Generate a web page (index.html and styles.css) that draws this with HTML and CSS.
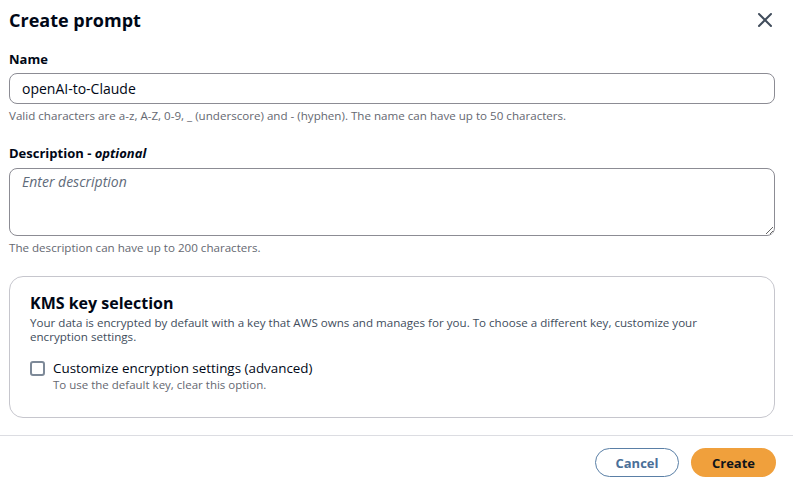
FILE: index.html
```html
<!DOCTYPE html>
<html lang="en">
<head>
    <meta charset="UTF-8">
    <title>Create prompt</title>
    <link rel="stylesheet" href="styles.css">
</head>
<body>
    <div class="modal">
        <!-- Header -->
        <div class="modal-header">
            <h1>Create prompt</h1>
            <button class="close-btn" title="Close">
                <svg width="16" height="16" viewBox="0 0 16 16"><path d="M2 2 L14 14 M14 2 L2 14" stroke="#414d5c" stroke-width="2" fill="none" stroke-linecap="round"/></svg>
            </button>
        </div>

        <!-- Body -->
        <div class="modal-body">
            <div class="field">
                <label class="field-label">Name</label>
                <input type="text" class="text-input" value="openAI-to-Claude">
                <p class="hint">Valid characters are a-z, A-Z, 0-9, _ (underscore) and - (hyphen). The name can have up to 50 characters.</p>
            </div>

            <div class="field">
                <label class="field-label">Description - <i>optional</i></label>
                <textarea class="text-area" placeholder="Enter description"></textarea>
                <p class="hint">The description can have up to 200 characters.</p>
            </div>

            <div class="kms-box">
                <h2>KMS key selection</h2>
                <p class="kms-desc">Your data is encrypted by default with a key that AWS owns and manages for you. To choose a different key, customize your encryption settings.</p>
                <label class="check-row">
                    <span class="check-box"></span>
                    <span class="check-text">
                        <span class="check-label">Customize encryption settings (advanced)</span>
                        <span class="check-hint">To use the default key, clear this option.</span>
                    </span>
                </label>
            </div>
        </div>

        <!-- Footer -->
        <div class="modal-footer">
            <button class="btn btn-cancel">Cancel</button>
            <button class="btn btn-create">Create</button>
        </div>
    </div>
</body>
</html>
```

FILE: styles.css
```css
* {
    margin: 0;
    padding: 0;
    box-sizing: border-box;
}

body {
    background-color: #ffffff;
    color: #000716;
    font-family: "Open Sans", Arial, sans-serif;
}

.modal {
    width: 793px;
    height: 486px;
    display: flex;
    flex-direction: column;
}

/* Header */
.modal-header {
    display: flex;
    align-items: center;
    justify-content: space-between;
    padding: 2px 20px 0 9px;
    height: 38px;
}

.modal-header h1 {
    font-size: 18px;
    font-weight: 700;
    color: #000716;
}

.close-btn {
    background: none;
    border: none;
    cursor: pointer;
    display: flex;
    padding: 0;
}

/* Body */
.modal-body {
    padding: 12px 18px 0 9px;
    display: flex;
    flex-direction: column;
}

.field {
    display: flex;
    flex-direction: column;
}

.field + .field {
    margin-top: 21px;
}

.field-label {
    font-size: 13px;
    font-weight: 700;
    margin-bottom: 5px;
}

.field + .field .field-label {
    margin-bottom: 6px;
}

.field-label i {
    font-weight: 700;
    font-style: italic;
}

.text-input,
.text-area {
    width: 100%;
    border: 1px solid #8c8c94;
    border-radius: 8px;
    font-family: inherit;
    font-size: 14px;
    color: #000716;
    padding: 0 12px;
}

.text-input {
    height: 31px;
}

.text-area {
    height: 68px;
    padding: 3px 12px;
    resize: vertical;
}

.text-area::placeholder {
    color: #5f6b7a;
    font-style: italic;
}

.hint {
    font-size: 11.6px;
    color: #656871;
    margin-top: 4px;
}

/* KMS container */
.kms-box {
    margin-top: 21px;
    border: 1px solid #c6c6cd;
    border-radius: 14px;
    padding: 15px 20px 20px 20px;
    height: 142px;
}

.kms-box h2 {
    font-size: 16px;
    font-weight: 700;
}

.kms-desc {
    font-size: 11.6px;
    color: #414d5c;
    margin-top: 2px;
    line-height: 14px;
    padding-right: 30px;
}

.check-row {
    display: flex;
    gap: 8px;
    margin-top: 16px;
}

.check-box {
    width: 15px;
    height: 15px;
    border: 2px solid #7d8998;
    border-radius: 3px;
    margin-top: 1px;
    flex-shrink: 0;
}

.check-text {
    display: flex;
    flex-direction: column;
}

.check-label {
    font-size: 13.4px;
    color: #000716;
    line-height: 17px;
}

.check-hint {
    font-size: 11.5px;
    color: #656871;
}

/* Footer */
.modal-footer {
    margin-top: auto;
    border-top: 1px solid #dcdde2;
    display: flex;
    justify-content: flex-end;
    gap: 12px;
    padding: 12px 17px 9px 0;
}

.btn {
    height: 29px;
    border-radius: 15px;
    font-family: inherit;
    font-size: 13px;
    font-weight: 700;
    cursor: pointer;
}

.btn-cancel {
    width: 84px;
    background: #ffffff;
    border: 1.5px solid #5a7fa6;
    color: #4a6f98;
}

.btn-create {
    width: 85px;
    background: #f0a03c;
    border: none;
    color: #0f141a;
}
```
